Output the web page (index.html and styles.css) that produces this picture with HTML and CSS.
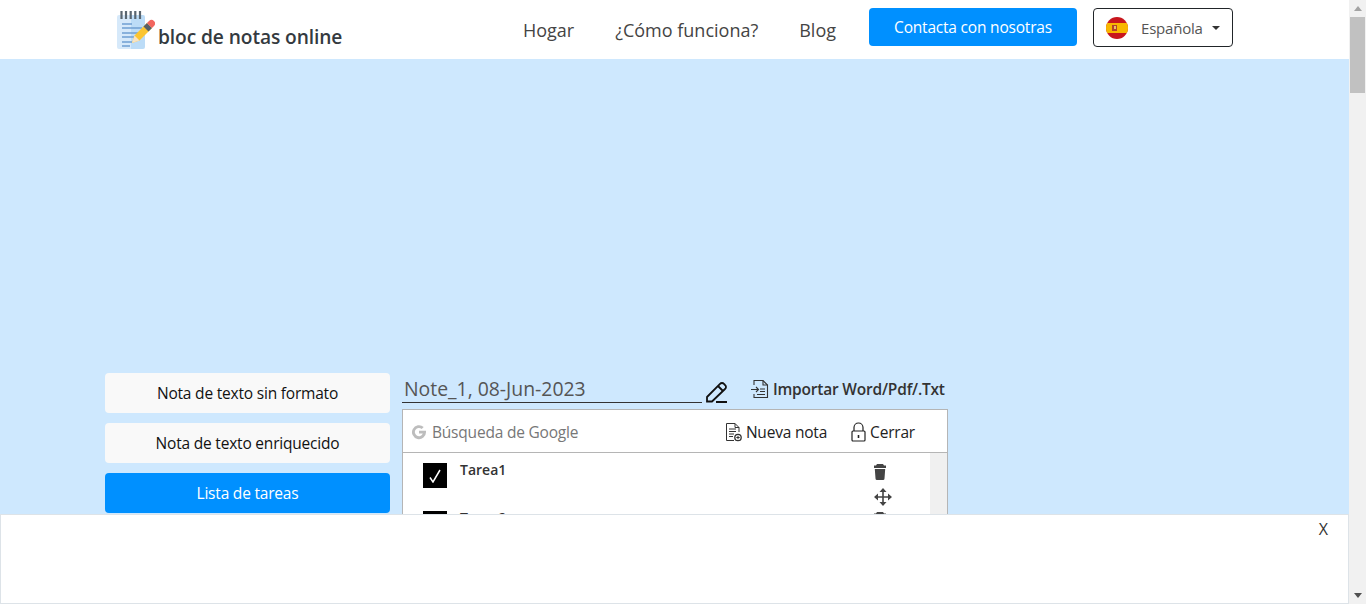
FILE: index.html
```html
<!DOCTYPE html>
<html lang="en">
<head>
    <meta charset="UTF-8">
    <meta name="viewport" content="width=device-width, initial-scale=1.0">
    <title>bloc de notas online</title>
    <link rel="stylesheet" href="styles.css">
</head>
<body>
<div class="window">
    <div class="page">
        <header class="topbar">
            <a class="brand" href="#">
                <svg class="brand-icon" width="38" height="40" viewBox="0 0 38 40">
                    <path d="M2 4h12v34H2a2 2 0 0 1-2-2V6a2 2 0 0 1 2-2z" fill="#d6e9fa"/>
                    <path d="M14 4h12a2 2 0 0 1 2 2v30a2 2 0 0 1-2 2H14z" fill="#bcdcf7"/>
                    <path d="M4.500 0v8M9 0v8M13.700 0v8M18.300 0v8M23 0v8" stroke="#5a6670" stroke-width="2.200"/>
                    <path d="M5 13h10M5 17h20M5 22h18M5 26h14M5 31h10M5 35h8" stroke="#6f9fd2" stroke-width="1.600"/>
                    <path d="M15 32l2.500-7.500L30 12l5 5-12.500 12.500z" fill="#fbc531"/>
                    <path d="M26.500 15.500l3.500-3.500 5 5-3.500 3.500z" fill="#566068"/>
                    <path d="M30 12l2-2a3 3 0 0 1 5 5l-2 2z" fill="#f2665f"/>
                    <path d="M15 32l2.500-7.500 5 5z" fill="#f7e3c4"/>
                </svg>
                <span class="brand-name">bloc de notas online</span>
            </a>
            <nav class="nav">
                <a href="#">Hogar</a>
                <a href="#">¿Cómo funciona?</a>
                <a href="#">Blog</a>
            </nav>
            <a class="contact-btn" href="#">Contacta con nosotras</a>
            <button class="lang-btn">
                <svg width="22" height="22" viewBox="0 0 22 22">
                    <clipPath id="flagClip"><circle cx="11" cy="11" r="11"/></clipPath>
                    <g clip-path="url(#flagClip)">
                        <rect width="22" height="22" fill="#c8161d"/>
                        <rect y="6" width="22" height="10" fill="#f8b700"/>
                        <rect x="6" y="8" width="5" height="6" fill="#b5422a"/>
                        <rect x="8" y="9" width="2" height="3" fill="#e8c26a"/>
                    </g>
                </svg>
                <span>Española</span>
                <i class="caret"></i>
            </button>
        </header>

        <div class="ad-space"></div>

        <main class="content">
            <aside class="note-types">
                <button class="type-btn">Nota de texto sin formato</button>
                <button class="type-btn">Nota de texto enriquecido</button>
                <button class="type-btn active">Lista de tareas</button>
            </aside>
            <section class="editor">
                <div class="title-row">
                    <div class="note-title">Note_1, 08-Jun-2023</div>
                    <svg class="edit-icon" width="24" height="22" viewBox="0 0 24 22" fill="none" stroke="#111" stroke-width="1.800">
                        <path d="M2 16L15 3a2.500 2.500 0 0 1 4 0l1 1a2.500 2.500 0 0 1 0 4L7 20.500H2z"/>
                        <path d="M13 5l5 5M11 21h11"/>
                    </svg>
                    <a class="import-link" href="#">
                        <svg width="19" height="20" viewBox="0 0 19 20" fill="none" stroke="#333" stroke-width="1.100">
                            <path d="M4 6V1.500h9l4.500 4.500v12.500H4V15"/>
                            <path d="M13 1.500V6h4.500M1 10.500h7M6 8l2.500 2.500L6 13M10 10h5M10 12.500h5M7 15.500h8"/>
                        </svg>
                        Importar Word/Pdf/.Txt
                    </a>
                </div>
                <div class="todo-box">
                    <div class="toolbar">
                        <svg class="g-icon" width="16" height="16" viewBox="0 0 16 16">
                            <path d="M15 6.700H8v2.800h3.800A4.100 4.100 0 1 1 10.700 5l2-2A7 7 0 1 0 15 8z" fill="#bdbdbd"/>
                        </svg>
                        <span class="search-label">Búsqueda de Google</span>
                        <a class="tool" href="#">
                            <svg width="17" height="20" viewBox="0 0 17 20" fill="none" stroke="#333" stroke-width="1">
                                <path d="M9 18.500H1.500v-17H10l4 4V10"/>
                                <path d="M10 1.500v4h4M4 7h7M4 9.500h7M4 12h5M4 14.500h4"/>
                                <circle cx="13" cy="15.500" r="3.200" fill="#fff" stroke-width="1.300"/>
                                <path d="M13 13.800v3.400M11.300 15.500h3.400"/>
                            </svg>
                            Nueva nota
                        </a>
                        <a class="tool lock" href="#">
                            <svg width="15" height="20" viewBox="0 0 15 20" fill="none" stroke="#222" stroke-width="1.200">
                                <path d="M3 9V5.500a4.500 4.500 0 0 1 9 0V9"/>
                                <rect x="1" y="9" width="13" height="10" rx="1"/>
                                <path d="M7.500 13v3" stroke-width="1.600"/>
                            </svg>
                            Cerrar
                        </a>
                    </div>
                    <div class="task-area">
                        <ul class="tasks">
                            <li class="task">
                                <span class="check">
                                    <svg width="12" height="14" viewBox="0 0 12 14" fill="none" stroke="#fff" stroke-width="1.500"><path d="M1 8.500L4 13 11 1"/></svg>
                                </span>
                                <span class="task-name">Tarea1</span>
                                <span class="task-actions">
                                    <svg width="12" height="16" viewBox="0 0 12 16" fill="#444">
                                        <path d="M3 0h6l1 1.500h2V4H0V1.500h2zM.8 5h10.400l-.7 9.500a1.500 1.500 0 0 1-1.500 1.500h-6a1.500 1.500 0 0 1-1.500-1.500z"/>
                                    </svg>
                                    <svg width="18" height="18" viewBox="0 0 18 18" fill="none" stroke="#444" stroke-width="1.600">
                                        <path d="M9 3v12M3 9h12"/>
                                        <path d="M5.500 4L9 0l3.500 4zM5.500 14L9 18l3.500-4zM4 5.500L0 9l4 3.500zM14 5.500L18 9l-4 3.500z" fill="#444" stroke="none"/>
                                    </svg>
                                </span>
                            </li>
                            <li class="task">
                                <span class="check">
                                    <svg width="12" height="14" viewBox="0 0 12 14" fill="none" stroke="#fff" stroke-width="1.500"><path d="M1 8.500L4 13 11 1"/></svg>
                                </span>
                                <span class="task-name">Tarea2</span>
                                <span class="task-actions">
                                    <svg width="12" height="16" viewBox="0 0 12 16" fill="#444">
                                        <path d="M3 0h6l1 1.500h2V4H0V1.500h2zM.8 5h10.400l-.7 9.500a1.500 1.500 0 0 1-1.500 1.500h-6a1.500 1.500 0 0 1-1.500-1.500z"/>
                                    </svg>
                                </span>
                            </li>
                        </ul>
                        <div class="task-scroll"></div>
                    </div>
                </div>
            </section>
        </main>

        <div class="bottom-ad"><span class="ad-close">X</span></div>
    </div>
    <div class="scrollbar">
        <i class="arrow-up"></i>
        <div class="thumb"></div>
        <i class="arrow-down"></i>
    </div>
</div>
</body>
</html>
```

FILE: styles.css
```css
* {
    box-sizing: border-box;
}
body {
    margin: 0;
    font-family: "Open Sans", "Noto Sans", sans-serif;
    color: #212529;
    background-color: #cee8fe;
}
a {
    color: inherit;
    text-decoration: none;
}
button {
    font-family: inherit;
    cursor: pointer;
}
.window {
    display: flex;
    height: 604px;
    overflow: hidden;
}
.page {
    position: relative;
    flex: 1;
    min-width: 0;
}

/* top bar */
.topbar {
    display: flex;
    align-items: flex-start;
    height: 59px;
    padding: 8px 116px 0 117px;
    background-color: white;
}
.brand {
    display: flex;
    align-items: flex-end;
    gap: 3px;
    margin-top: 3px;
}
.brand-icon {
    display: block;
}
.brand-name {
    font-size: 19.200px;
    font-weight: 600;
    line-height: 26px;
    letter-spacing: -0.100px;
    color: #343a40;
    margin-bottom: 1px;
}
.nav {
    display: flex;
    gap: 41px;
    margin: 10px 33px 0 auto;
    font-size: 18px;
    line-height: 24px;
    color: #444;
}
.contact-btn {
    display: flex;
    align-items: center;
    justify-content: center;
    width: 208px;
    height: 38px;
    background-color: #0090ff;
    color: white;
    font-size: 15.500px;
    letter-spacing: -0.200px;
    border-radius: 4px;
}
.lang-btn {
    display: flex;
    align-items: center;
    width: 140px;
    height: 39px;
    margin-left: 16px;
    padding: 0 0 0 12px;
    background-color: white;
    border: 1px solid #212529;
    border-radius: 4px;
    font-size: 15px;
    letter-spacing: -0.200px;
    color: #555;
}
.lang-btn span {
    margin-left: 13px;
}
.caret {
    margin-left: 9px;
    border-top: 4px solid #333;
    border-left: 4px solid transparent;
    border-right: 4px solid transparent;
}

.ad-space {
    height: 314px;
}

/* note area */
.content {
    display: flex;
    gap: 12px;
    padding-left: 105px;
}
.note-types {
    display: flex;
    flex-direction: column;
    gap: 10px;
    width: 285px;
}
.type-btn {
    height: 40px;
    border: none;
    border-radius: 4px;
    background-color: #f9f9f9;
    color: #111;
    font-size: 15.500px;
    letter-spacing: -0.200px;
}
.type-btn.active {
    background-color: #0090ff;
    color: white;
}
.editor {
    width: 546px;
}
.title-row {
    display: flex;
    align-items: flex-start;
    height: 36px;
}
.note-title {
    flex: none;
    width: 300px;
    height: 30px;
    padding-left: 2px;
    border-bottom: 1px solid #333;
    font-size: 19.400px;
    line-height: 31px;
    color: #555;
}
.edit-icon {
    flex: none;
    margin: 8px 0 0 3px;
}
.import-link {
    display: flex;
    align-items: center;
    gap: 4px;
    margin: 5px 0 0 21px;
    font-size: 15.500px;
    font-weight: 600;
    letter-spacing: -0.200px;
    color: #333;
    white-space: nowrap;
}
.todo-box {
    border: 1px solid #b5b5b5;
    background-color: white;
}
.toolbar {
    display: flex;
    align-items: center;
    height: 43px;
    padding: 2px 0 0 8px;
    border-bottom: 1px solid #b5b5b5;
}
.search-label {
    margin-left: 5px;
    font-size: 15.500px;
    letter-spacing: -0.200px;
    color: #777;
}
.tool {
    display: flex;
    align-items: center;
    gap: 4px;
    margin-left: auto;
    margin-right: 24px;
    font-size: 15.500px;
    letter-spacing: -0.200px;
    color: #222;
}
.tool.lock {
    margin-left: 0;
    margin-right: 32px;
}
.task-area {
    display: flex;
}
.tasks {
    flex: 1;
    margin: 0;
    padding: 0;
    list-style: none;
}
.task {
    display: flex;
    height: 48px;
    padding: 10px 0 0 20px;
}
.check {
    display: flex;
    align-items: center;
    justify-content: center;
    width: 24px;
    height: 25px;
    background-color: black;
}
.task-name {
    margin-left: 13px;
    font-size: 14px;
    font-weight: 600;
    line-height: 14px;
    color: #333;
}
.task-actions {
    display: flex;
    flex-direction: column;
    align-items: flex-start;
    gap: 8px;
    width: 18px;
    margin-left: auto;
    margin-right: 38px;
    padding-top: 1px;
}
.task-actions svg {
    flex: none;
}
.task-scroll {
    width: 17px;
    height: 96px;
    background-color: #f0f0f0;
}

/* fixed ad that covers the bottom of the page */
.bottom-ad {
    position: absolute;
    left: 0;
    right: 0;
    top: 514px;
    height: 90px;
    background-color: white;
    border: 1px solid #dde3e8;
    text-align: right;
}
.ad-close {
    display: inline-block;
    padding: 3px 20px 0 0;
    font-size: 16px;
    color: #333;
}

/* page scrollbar */
.scrollbar {
    display: flex;
    flex-direction: column;
    align-items: center;
    width: 17px;
    background-color: #f1f1f1;
}
.arrow-up {
    margin: 6px 0;
    border-bottom: 5px solid #a3a3a3;
    border-left: 4px solid transparent;
    border-right: 4px solid transparent;
}
.thumb {
    width: 15px;
    height: 76px;
    background-color: #c1c1c1;
}
.arrow-down {
    margin-top: auto;
    margin-bottom: 6px;
    border-top: 5px solid #505050;
    border-left: 4px solid transparent;
    border-right: 4px solid transparent;
}
```
